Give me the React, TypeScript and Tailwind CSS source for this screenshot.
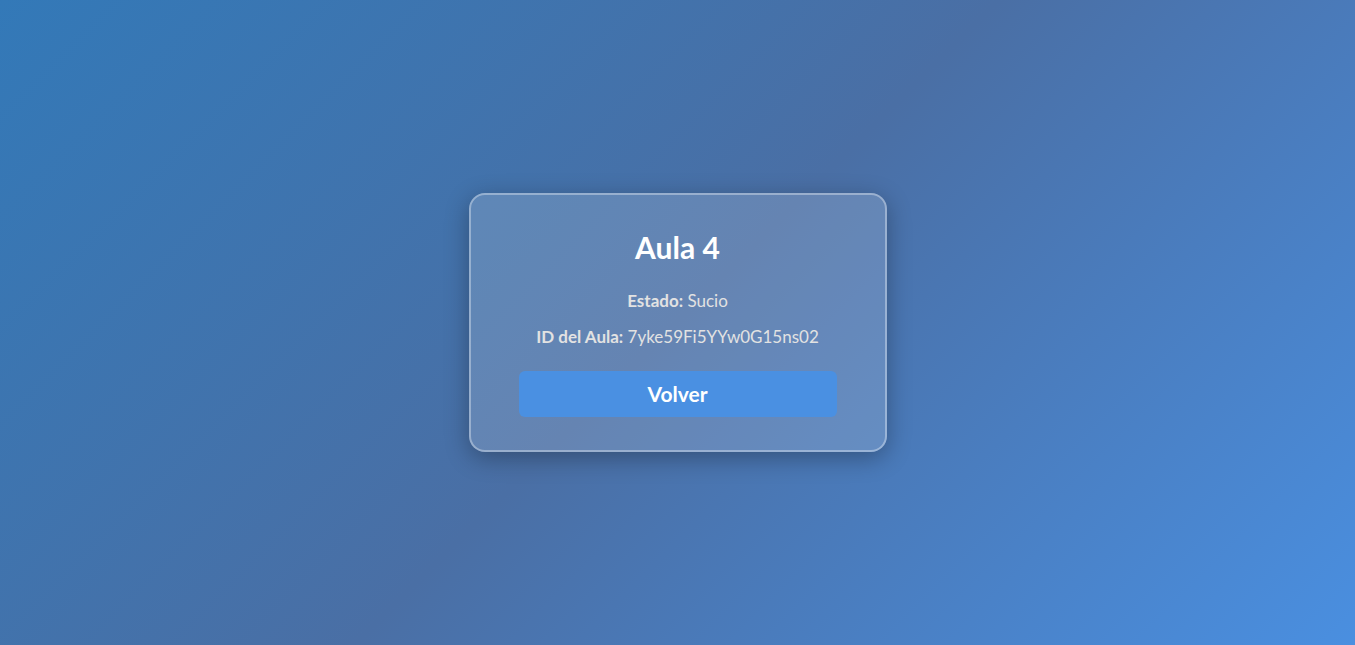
export default function App() {
  return (
    <div
      className="min-h-screen w-full flex items-center justify-center bg-[linear-gradient(135deg,#3379b8_0%,#4a6fa5_50%,#4a8fe0_100%)]"
      style={{ fontFamily: 'Lato, "Noto Sans", sans-serif' }}
    >
      <div className="w-[418px] rounded-[16px] border-2 border-white/35 bg-white/15 px-[48px] pt-[34px] pb-[33px] text-center shadow-[0_6px_24px_rgba(0,0,0,0.3)]">
        <h2 className="text-[30px] font-bold leading-[36px] text-white">Aula 4</h2>
        <p className="mt-[25px] text-[17px] leading-[22px] text-[#e2e2e2]">
          <strong>Estado:</strong> Sucio
        </p>
        <p className="mt-[14px] text-[17px] leading-[22px] text-[#e2e2e2]">
          <strong>ID del Aula:</strong> 7yke59Fi5YYw0G15ns02
        </p>
        <button className="mt-[23px] h-[46px] w-full rounded-[6px] bg-[#4a90e2] text-[21px] font-bold text-white">
          Volver
        </button>
      </div>
    </div>
  )
}
